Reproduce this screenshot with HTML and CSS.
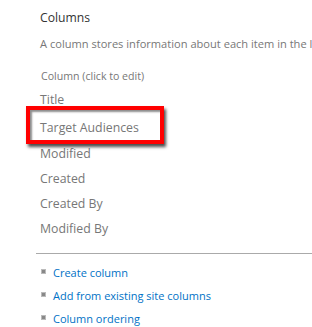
FILE: index.html
```html
<!DOCTYPE html>
<html>
  <head>
    <meta charset="UTF-8">
    <title>Columns</title>
    <link rel="stylesheet" href="styles.css">
  </head>
  <body>
  <div class="page">
    <h2 class="head">Columns</h2>
    <p class="desc">A column stores information about each item in the list. The following columns are currently available in this list:</p>
    <div class="caption">Column (click to edit)</div>
    <ul class="cols">
      <li>Title</li>
      <li class="mark">Target Audiences</li>
      <li class="after">Modified</li>
      <li>Created</li>
      <li>Created By</li>
      <li>Modified By</li>
    </ul>
  </div>
  <hr class="line">
  <ul class="links">
    <li><a href="#">Create column</a></li>
    <li><a href="#">Add from existing site columns</a></li>
    <li><a href="#">Column ordering</a></li>
  </ul>
  </body>
</html>
```

FILE: styles.css
```css
body {
  margin: 0;
  font-family: "Open Sans", "Noto Sans", sans-serif;
  font-size: 12.3px;
  color: #777;
  background-color: white;
  overflow: hidden;
 }
.page {
  padding-left: 40px;
  padding-top: 10px;
 }
.head {
  margin: 0;
  font-size: 12.2px; font-weight: normal;
  line-height: 16px;
  color: #333;
 }
.desc {
  margin: 10px 0 0 0;
  font-size: 11.1px;
  line-height: 16px;
  white-space: nowrap;
 }
.caption {
  margin-top: 16px;
  margin-left: 1px;
  font-size: 10.6px;
  line-height: 16px;
 }
.cols {
  list-style: none;
  margin: 3px 0 0 0;
  padding: 0;
 }
.cols li {
  line-height: 25px;
  height: 25px;
 }
.cols .mark {
  margin-top: 3px;
  position: relative;
 }
.cols .mark::after {
  content: "";
  position: absolute;
  left: -14px;
  top: -9px;
  width: 130px;
  height: 30px;
  border: 4px solid #f00;
  box-shadow: 2px 3px 3px rgba(0,0,0,0.7), inset 2px 2px 2px rgba(0,0,0,0.45);
 }
.cols .after { margin-top: 1px; }

.line {
  margin: 12px 0 0 36px;
  border: 0;
  border-top: 1px solid #aaa;
  height: 0;
 }
.links {
  list-style: none;
  margin: 7px 0 0 0;
  padding: 0 0 0 41px;
  font-size: 11px;
 }
.links li {
  height: 23px;
  line-height: 23px;
 }
.links li::before {
  content: "";
  display: inline-block;
  width: 3px; height: 3px;
  background-color: #888;
  border: 1px solid #bbb;
  margin-right: 7px;
  vertical-align: 3px;
 }
.links a {
  color: #0072c6;
  text-decoration: none;
 }
```
